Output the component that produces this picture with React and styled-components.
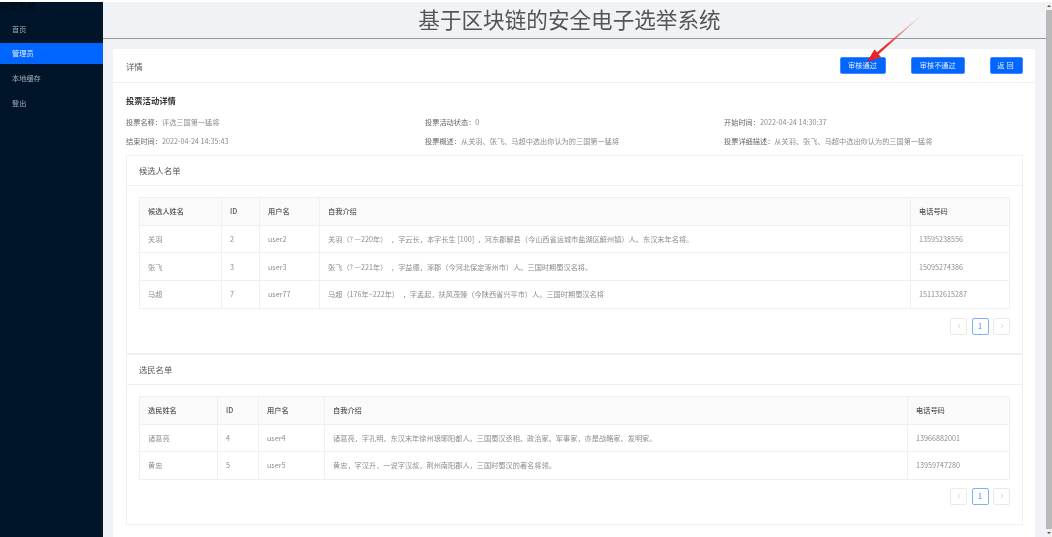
import React from "react";
import styled, { createGlobalStyle } from "styled-components";
import { ChevronLeft, ChevronRight } from "lucide-react";

const GlobalStyle = createGlobalStyle`
  html, body {
    margin: 0;
    padding: 0;
    background: #fff;
    overflow: hidden;
  }
  * {
    box-sizing: border-box;
  }
`;

const Page = styled.div`
  position: relative;
  width: 1052px;
  height: 537px;
  padding-top: 2px;
  display: flex;
  overflow: hidden;
  background: #fff;
  font-family: "Noto Sans CJK SC", "Noto Sans", sans-serif;
  font-size: 7.2px;
  color: #777;
  filter: blur(0.3px);
`;

const Sidebar = styled.aside`
  width: 103px;
  flex-shrink: 0;
  background: #001529;
  display: flex;
  flex-direction: column;
  gap: 3.7px;
`;

const Brand = styled.div`
  height: 13px;
  line-height: 10px;
  font-size: 9px;
  color: #000a12;
  white-space: nowrap;
`;

const MenuItem = styled.div`
  height: 21px;
  line-height: 21px;
  padding-left: 12px;
  font-size: 7.2px;
  color: ${(p) => (p.$active ? "#e6efff" : "#a6adb4")};
  background: ${(p) => (p.$active ? "#0066ff" : "transparent")};
`;

const Main = styled.main`
  flex: 1;
  min-width: 0;
  display: flex;
  flex-direction: column;
  background: #f0f2f5;
`;

const Header = styled.header`
  height: 37px;
  flex-shrink: 0;
  border-bottom: 1px solid #999;
  display: flex;
  align-items: center;
  justify-content: center;
  padding: 0 10px 3px 0;
  font-size: 21.6px;
  line-height: 1;
  color: #555;
`;

const Content = styled.div`
  flex: 1;
  padding: 10px 11px 0 10px;
`;

const Card = styled.section`
  height: 100%;
  background: #fff;
`;

const CardHead = styled.div`
  height: 34px;
  padding: 8px 12px 8px 13px;
  border-bottom: 1px solid #f0f0f0;
  display: flex;
  align-items: center;
  font-size: 8.4px;
  color: #555;
`;

const Actions = styled.div`
  margin-left: auto;
  display: flex;
  gap: 25.5px;
`;

const Button = styled.button`
  width: ${(p) => p.$w}px;
  height: 17px;
  padding: 0;
  border: 1px solid #3f88ff;
  border-radius: 2px;
  background: #0066ff;
  color: #dfeaff;
  font-family: inherit;
  font-size: 7.2px;
  line-height: 1;
  letter-spacing: ${(p) => (p.$wide ? "2px" : "0")};
`;

const CardBody = styled.div`
  padding: 11px 12px 0 13px;
`;

const InfoTitle = styled.h2`
  margin: 0 0 7px;
  height: 12px;
  line-height: 12px;
  font-size: 8.3px;
  font-weight: 700;
  color: #333;
`;

const InfoGrid = styled.div`
  display: grid;
  grid-template-columns: repeat(3, 299px);
  grid-auto-rows: 19px;
  margin-bottom: 3.5px;
`;

const InfoItem = styled.div`
  line-height: 19px;
  font-size: 7.2px;
  color: #8c8c8c;
  white-space: nowrap;

  b {
    font-weight: 400;
    color: #666;
  }
`;

const ListCard = styled.div`
  border: 1px solid #f0f0f0;
  border-top-color: #f3f3f3;
`;

const ListSection = styled.div`
  height: ${(p) => p.$h}px;
  & + & {
    border-top: 2px solid #f0f0f0;
  }
`;

const ListTitle = styled.div`
  height: 30px;
  line-height: 29px;
  padding-left: 12px;
  border-bottom: 1px solid #f0f0f0;
  font-size: 8.3px;
  color: #555;
`;

const ListBody = styled.div`
  padding: 11px 12px 0;
`;

const Table = styled.table`
  width: 100%;
  table-layout: fixed;
  border-collapse: collapse;
  border: 1px solid #f0f0f0;
`;

const Th = styled.th`
  width: ${(p) => (p.$w ? `${p.$w}px` : "auto")};
  height: 28px;
  padding: 0 8px;
  background: #fafafa;
  border-right: 1px solid #f0f0f0;
  border-bottom: 1px solid #f0f0f0;
  text-align: left;
  font-size: 7.2px;
  font-weight: 500;
  color: #555;
`;

const Td = styled.td`
  height: ${(p) => p.$h}px;
  padding: 0 8px;
  border-right: 1px solid #f0f0f0;
  border-bottom: 1px solid #f0f0f0;
  font-size: 7.2px;
  color: #8c8c8c;
  white-space: nowrap;
  overflow: hidden;
`;

const Pager = styled.div`
  display: flex;
  justify-content: flex-end;
  gap: 4.5px;
  margin-top: ${(p) => p.$top}px;
`;

const PageButton = styled.div`
  width: 17px;
  height: 17px;
  display: flex;
  align-items: center;
  justify-content: center;
  border-radius: 2px;
  border: 1px solid ${(p) => (p.$active ? "#7fb0ff" : "#e9e9e9")};
  color: ${(p) => (p.$active ? "#3f7fff" : "#c4c4c4")};
  font-size: 7.2px;
`;

const Scrollbar = styled.div`
  width: 6px;
  flex-shrink: 0;
  display: flex;
  flex-direction: column;
  align-items: center;
  gap: 3px;
  background: #f1f1f1;
  padding: 3px 0 3px;
`;

const ScrollArrow = styled.div`
  width: 0;
  height: 0;
  flex-shrink: 0;
  border-left: 2px solid transparent;
  border-right: 2px solid transparent;
  border-bottom: ${(p) => (p.$down ? "0" : "2px solid #555")};
  border-top: ${(p) => (p.$down ? "2px solid #555" : "0")};
`;

const ScrollThumb = styled.div`
  flex: 1;
  width: 100%;
  background: #b9b9b9;
`;

const Arrow = styled.svg`
  position: absolute;
  left: 860px;
  top: 12px;
  width: 65px;
  height: 55px;
`;

const candidates = [
  ["关羽", "2", "user2", "关羽\uFF08? —220年\uFF09\u2002\uFF0C字云长\uFF0C本字长生 [100]\u2002\uFF0C河东郡解县\uFF08今山西省运城市盐湖区解州镇\uFF09人。东汉末年名将。", "13595238556"],
  ["张飞", "3", "user3", "张飞\uFF08? —221年\uFF09\u2002\uFF0C字益德\uFF0C涿郡\uFF08今河北保定涿州市\uFF09人。三国时期蜀汉名将。", "15095274386"],
  ["马超", "7", "user77", "马超\uFF08176年~222年\uFF09\u2002\uFF0C字孟起\uFF0C扶风茂陵\uFF08今陕西省兴平市\uFF09人。三国时期蜀汉名将", "151132615287"],
];

const voters = [
  ["诸葛亮", "4", "user4", "诸葛亮\uFF0C字孔明\uFF0C东汉末年徐州琅琊阳都人。三国蜀汉丞相、政治家、军事家\uFF0C亦是战略家、发明家。", "13966882001"],
  ["黄忠", "5", "user5", "黄忠\uFF0C字汉升\uFF0C一说字汉叔\uFF0C荆州南阳郡人\uFF0C三国时蜀汉的著名将领。", "13959747280"],
];

const info = [
  ["投票名称\uFF1A", "评选三国第一猛将"],
  ["投票活动状态\uFF1A", "0"],
  ["开始时间\uFF1A", "2022-04-24 14:30:37"],
  ["结束时间\uFF1A", "2022-04-24 14:35:43"],
  ["投票概述\uFF1A", "从关羽、张飞、马超中选出你认为的三国第一猛将"],
  ["投票详细描述\uFF1A", "从关羽、张飞、马超中选出你认为的三国第一猛将"],
];

const PersonTable = ({ nameLabel, widths, rows, rowHeight }) => (
  <Table>
    <thead>
      <tr>
        <Th $w={widths[0]}>{nameLabel}</Th>
        <Th $w={widths[1]}>ID</Th>
        <Th $w={widths[2]}>用户名</Th>
        <Th>自我介绍</Th>
        <Th $w={widths[3]}>电话号码</Th>
      </tr>
    </thead>
    <tbody>
      {rows.map((row) => (
        <tr key={row[2]}>
          {row.map((cell, idx) => (
            <Td key={idx} $h={rowHeight}>
              {cell}
            </Td>
          ))}
        </tr>
      ))}
    </tbody>
  </Table>
);

const Pagination = ({ top }) => (
  <Pager $top={top}>
    <PageButton>
      <ChevronLeft size={8} />
    </PageButton>
    <PageButton $active>1</PageButton>
    <PageButton>
      <ChevronRight size={8} />
    </PageButton>
  </Pager>
);

const App = () => (
  <Page>
    <GlobalStyle />
    <Sidebar>
      <Brand>投票系统</Brand>
      <MenuItem>首页</MenuItem>
      <MenuItem $active>管理员</MenuItem>
      <MenuItem>本地缓存</MenuItem>
      <MenuItem>登出</MenuItem>
    </Sidebar>
    <Main>
      <Header>基于区块链的安全电子选举系统</Header>
      <Content>
        <Card>
          <CardHead>
            详情
            <Actions>
              <Button $w={46}>审核通过</Button>
              <Button $w={53.5}>审核不通过</Button>
              <Button $w={33} $wide>
                返回
              </Button>
            </Actions>
          </CardHead>
          <CardBody>
            <InfoTitle>投票活动详情</InfoTitle>
            <InfoGrid>
              {info.map(([label, value]) => (
                <InfoItem key={label}>
                  <b>{label}</b>
                  {value}
                </InfoItem>
              ))}
            </InfoGrid>
            <ListCard>
              <ListSection $h={197}>
                <ListTitle>候选人名单</ListTitle>
                <ListBody>
                  <PersonTable nameLabel="候选人姓名" widths={[82, 38, 60, 99]} rows={candidates} rowHeight={27.7} />
                  <Pagination top={9} />
                </ListBody>
              </ListSection>
              <ListSection $h={171}>
                <ListTitle>选民名单</ListTitle>
                <ListBody>
                  <PersonTable nameLabel="选民姓名" widths={[78, 41, 66, 102]} rows={voters} rowHeight={27.5} />
                  <Pagination top={8} />
                </ListBody>
              </ListSection>
            </ListCard>
          </CardBody>
        </Card>
      </Content>
    </Main>
    <Scrollbar>
      <ScrollArrow />
      <ScrollThumb />
      <ScrollArrow $down />
    </Scrollbar>
    <Arrow viewBox="0 0 65 55">
      <defs>
        <linearGradient id="arrowFade" x1="1" y1="0" x2="0" y2="1">
          <stop offset="0" stopColor="#f5a0a0" stopOpacity="0.2" />
          <stop offset="0.6" stopColor="#ee3030" />
          <stop offset="1" stopColor="#e81c1c" />
        </linearGradient>
      </defs>
      <polygon
        points="60,5 18.6,42.3 21,45 7,50 14.5,37.2 17,40.3 59.5,4.5"
        fill="url(#arrowFade)"
      />
    </Arrow>
  </Page>
);

export default App;
